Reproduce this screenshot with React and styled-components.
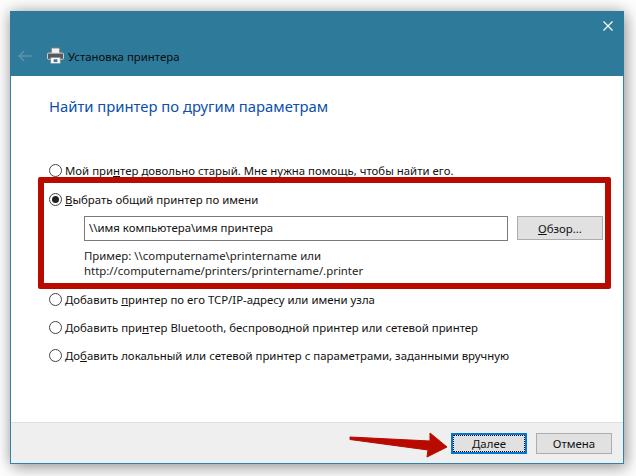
import React from 'react';
import styled, { createGlobalStyle } from 'styled-components';

const Global = createGlobalStyle`
  html, body {
    margin: 0;
    background: #fff;
  }
  body {
    width: 636px;
    height: 476px;
    overflow: hidden;
    font-family: "Noto Sans", "Open Sans", sans-serif;
    font-size: 11.4px;
    color: #111;
  }
`

const Page = styled.div`
  width: 636px;
  height: 476px;
  padding: 11px 12px 12px 10px;
  box-sizing: border-box;
  background: #fdfdfd;
`

const Window = styled.div`
  position: relative;
  height: 100%;
  display: flex;
  flex-direction: column;
  background: #fff;
  border: 1px solid #2e84a8;
  border-top: none;
  box-sizing: border-box;
  box-shadow: 0 0 14px rgba(0, 0, 0, 0.32), 4px 6px 14px rgba(0, 0, 0, 0.18);
`

const TitleBar = styled.div`
  height: 65px;
  margin: 0 -1px;
  background: #2e7a9a;
  position: relative;
  display: flex;
  align-items: flex-end;
  padding: 0 0 11px 8px;
  box-sizing: border-box;
  color: #0c0c0c;
`

const BackIcon = styled.svg`
  width: 14px;
  height: 12px;
  margin: 0 15px 3px 0;
  flex: none;
`

const PrinterIcon = styled.svg`
  width: 17px;
  height: 17px;
  margin: 0 4px 1px 0;
  flex: none;
`

const TitleText = styled.span`
  line-height: 16px;
`

const CloseIcon = styled.svg`
  position: absolute;
  right: 11px;
  top: 10px;
  width: 10px;
  height: 10px;
`

const Body = styled.div`
  flex: 1;
  padding: 18px 12px 0 27px;
`

const Heading = styled.h1`
  margin: 0 0 38px 11px;
  font-size: 14.8px;
  line-height: 24px;
  font-weight: 400;
  color: #0b4fb0;
`

const Option = styled.label`
  display: flex;
  align-items: center;
  height: 28px;
  padding-left: ${(p) => p.$inset || 11}px;
  white-space: nowrap;
`

const Radio = styled.span`
  width: 13px;
  height: 13px;
  margin-right: 3px;
  border: 1px solid #444;
  border-radius: 50%;
  box-sizing: border-box;
  flex: none;
  display: flex;
  align-items: center;
  justify-content: center;
  &::after {
    content: '';
    display: ${(p) => (p.$checked ? 'block' : 'none')};
    width: 7px;
    height: 7px;
    border-radius: 50%;
    background: #222;
  }
`

const Highlight = styled.div`
  height: 112px;
  margin: -7px 0 -4px;
  padding-top: 2px;
  border: 6px solid #b90a00;
  border-radius: 2px;
  box-sizing: border-box;
  position: relative;
  z-index: 1;
`

const FieldRow = styled.div`
  display: flex;
  gap: 9px;
  margin: 3px 0 0 40px;
`

const Field = styled.div`
  width: 424px;
  height: 25px;
  border: 1px solid #7a7a7a;
  box-sizing: border-box;
  padding: 0 0 2px 4px;
  display: flex;
  align-items: center;
`

const Button = styled.button`
  width: ${(p) => p.$width || 76}px;
  height: ${(p) => p.$height || 21}px;
  padding: 0;
  background: #e1e1e1;
  border: 1px solid #adadad;
  box-sizing: border-box;
  font: inherit;
  color: #111;
`

const DefaultButton = styled(Button)`
  border: 2px solid #0078d7;
  outline: 1px dotted #111;
  outline-offset: -3px;
`

const Hint = styled.div`
  margin: 7px 0 0 40px;
  line-height: 15px;
  color: #222;
`

const Footer = styled.div`
  height: 41px;
  background: #efefef;
  border-top: 1px solid #dfdfdf;
  box-sizing: border-box;
  display: flex;
  justify-content: flex-end;
  align-items: center;
  gap: 9px;
  padding: 0 11px 0 0;
`

const Arrow = styled.svg`
  position: absolute;
  left: 339px;
  top: 420px;
  width: 110px;
  height: 40px;
`

const Key = styled.span`
  text-decoration: underline;
`

export default function App() {
  return (
    <>
      <Global />
      <Page>
        <Window>
          <TitleBar>
            <BackIcon viewBox="0 0 14 12">
              <path d="M13.5 6H1.5M6 1.2 1.2 6 6 10.8" fill="none" stroke="#5b93ab" strokeWidth="1.6" />
            </BackIcon>
            <PrinterIcon viewBox="0 0 18 18">
              <rect x="4.5" y="1" width="9" height="6" fill="#f2f2f2" stroke="#777" />
              <rect x="0.5" y="6.5" width="17" height="6.5" rx="1" fill="#55595c" stroke="#d8d8d8" />
              <rect x="4" y="11" width="10" height="6.5" fill="#fff" stroke="#888" strokeWidth="0.8" />
              <rect x="7" y="13" width="4" height="3" fill="#2b7cb8" />
            </PrinterIcon>
            <TitleText>Установка принтера</TitleText>
            <CloseIcon viewBox="0 0 10 10">
              <path d="M0.5 0.5 9.5 9.5M9.5 0.5 0.5 9.5" stroke="#fff" strokeWidth="1.2" />
            </CloseIcon>
          </TitleBar>
          <Body>
            <Heading>Найти принтер по другим параметрам</Heading>
            <Option>
              <Radio />
              <span>Мой при<Key>н</Key>тер довольно старый. Мне нужна помощь, чтобы найти его.</span>
            </Option>
            <Highlight>
              <Option $inset={5}>
                <Radio $checked />
                <span><Key>В</Key>ыбрать общий принтер по имени</span>
              </Option>
              <FieldRow>
                <Field>\\имя компьютера\имя принтера</Field>
                <Button $width={86} $height={24}><Key>О</Key>бзор...</Button>
              </FieldRow>
              <Hint>
                Пример: \\computername\printername или
                <br />
                http://computername/printers/printername/.printer
              </Hint>
            </Highlight>
            <Option>
              <Radio />
              <span>Добавить <Key>п</Key>ринтер по его TCP/IP-адресу или имени узла</span>
            </Option>
            <Option>
              <Radio />
              <span>Добавить при<Key>н</Key>тер Bluetooth, беспроводной принтер или сетевой принтер</span>
            </Option>
            <Option>
              <Radio />
              <span>До<Key>б</Key>авить локальный или сетевой принтер с параметрами, заданными вручную</span>
            </Option>
          </Body>
          <Footer>
            <DefaultButton><Key>Д</Key>алее</DefaultButton>
            <Button>Отмена</Button>
          </Footer>
        </Window>
        <Arrow viewBox="0 0 110 40">
          <path d="M11 17 L11 19.5 L89 30 L88 37 L108 27 L91 13 L91 21 Z" fill="#b90a00" stroke="#b90a00" strokeLinejoin="round" />
        </Arrow>
      </Page>
    </>
  )
}
